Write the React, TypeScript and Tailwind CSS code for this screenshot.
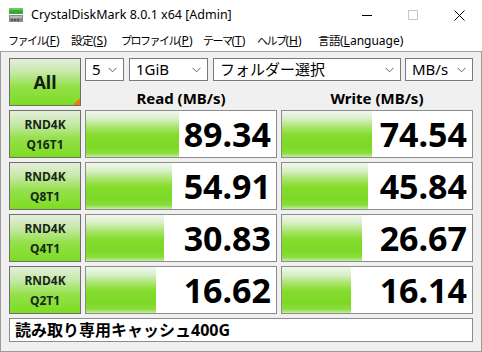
import React from "react";

const F = { fontFamily: '"Noto Sans", "Noto Sans CJK JP", sans-serif' };

const barGrad =
  "linear-gradient(to bottom, #f2f7ee 0%, #d6efc4 18%, #a6e466 36%, #84dc2c 52%, #7dd826 78%, #8ade3e 92%, #c6eea6 100%)";
const btnGrad =
  "linear-gradient(to bottom, #e4efdc 0%, #c4e8a4 30%, #94e04a 60%, #7edc22 100%)";

const rows = [
  { l1: "RND4K", l2: "Q16T1", r: "89.34", rw: 93, w: "74.54", ww: 90 },
  { l1: "RND4K", l2: "Q8T1", r: "54.91", rw: 86, w: "45.84", ww: 86 },
  { l1: "RND4K", l2: "Q4T1", r: "30.83", rw: 78, w: "26.67", ww: 80 },
  { l1: "RND4K", l2: "Q2T1", r: "16.62", rw: 70, w: "16.14", ww: 69 },
];

function Chevron() {
  return (
    <svg width="9" height="6" viewBox="0 0 9 6" className="shrink-0">
      <path d="M0.5 0.8 L4.5 4.8 L8.5 0.8" fill="none" stroke="#606060" strokeWidth="1" />
    </svg>
  );
}

function Combo({ w, text }: { w: string; text: string }) {
  return (
    <div className={`${w} h-[23px] bg-white border border-[#7a7a7a] flex items-center justify-between pl-[6px] pr-[6px]`}>
      <span className="text-[15px] leading-none text-[#000]">{text}</span>
      <Chevron />
    </div>
  );
}

function Cell({ value, width }: { value: string; width: number }) {
  return (
    <div className="relative h-[48px] bg-white border border-[#8c8c8c]">
      <div className="absolute left-0 top-0 bottom-0" style={{ width, background: barGrad }} />
      <div className="relative h-full flex items-center justify-end pr-[5px]">
        <span className="text-[34px] font-bold leading-none text-black">{value}</span>
      </div>
    </div>
  );
}

function MenuItem({ w, jp, key1, rest, kanji }: { w: string; jp: string; key1: string; rest?: string; kanji?: boolean }) {
  return (
    <div className={`${w} shrink-0 whitespace-nowrap flex items-center`}>
      <span className={kanji ? "text-[11.5px] tracking-[-0.5px]" : "text-[11px] tracking-[-1.5px]"}>{jp}</span>
      <span className="text-[12px]">
        (<span className="underline">{key1}</span>
        {rest ?? ""})
      </span>
    </div>
  );
}

export default function App() {
  return (
    <div className="w-[482px] h-[352px] overflow-hidden bg-white flex flex-col" style={F}>
      {/* Title bar */}
      <div className="h-[30px] flex items-center bg-white shrink-0">
        <svg width="16" height="16" viewBox="0 0 16 16" className="ml-[8px]">
          <rect x="1" y="1" width="14" height="6" fill="#3aa83a" />
          <rect x="1" y="1" width="14" height="2" fill="#66cc55" />
          <rect x="1" y="8" width="14" height="7" fill="#8a8a8a" />
          <rect x="2" y="9" width="12" height="2" fill="#b8b8b8" />
          <rect x="3" y="12" width="2" height="2" fill="#555" />
          <rect x="6" y="12" width="2" height="2" fill="#555" />
          <rect x="9" y="12" width="2" height="2" fill="#555" />
        </svg>
        <span className="ml-[7px] text-[12.5px] text-[#000] leading-none">CrystalDiskMark 8.0.1 x64 [Admin]</span>
        <div className="ml-auto flex items-center h-full">
          <div className="w-[46px] h-full flex items-center justify-center">
            <div className="w-[10px] h-[1px] bg-[#000]" />
          </div>
          <div className="w-[46px] h-full flex items-center justify-center">
            <div className="w-[10px] h-[10px] border border-[#c8c8c8]" />
          </div>
          <div className="w-[46px] h-full flex items-center justify-center">
            <svg width="11" height="11" viewBox="0 0 11 11">
              <path d="M0.5 0.5 L10.5 10.5 M10.5 0.5 L0.5 10.5" stroke="#000" strokeWidth="1" />
            </svg>
          </div>
        </div>
      </div>
      {/* Menu bar */}
      <div className="h-[22px] flex items-center text-[12px] text-[#000] leading-none shrink-0 border-b border-[#a0a0a0] pl-[8px]">
        <MenuItem w="w-[63px]" jp="ファイル" key1="F" />
        <MenuItem w="w-[50px]" jp="設定" key1="S" kanji />
        <MenuItem w="w-[82px]" jp="プロファイル" key1="P" />
        <MenuItem w="w-[54px]" jp="テーマ" key1="T" />
        <MenuItem w="w-[61px]" jp="ヘルプ" key1="H" />
        <MenuItem w="w-[90px]" jp="言語" key1="L" rest="anguage" kanji />
      </div>
      {/* Content */}
      <div className="flex-1 bg-[#f0f0f0] border-l border-r border-b border-[#9a9a9a] pl-[8px] pt-[6px]">
        <div className="grid grid-cols-[72px_192px_192px] gap-x-[4px] gap-y-[4px]">
          {/* All button */}
          <div
            className="relative h-[48px] border border-[#6e6e6e] flex items-center justify-center"
            style={{ background: btnGrad }}
          >
            <span className="text-[18px] font-bold text-[#102010] leading-none">All</span>
            <svg width="7" height="7" viewBox="0 0 7 7" className="absolute right-0 bottom-0">
              <path d="M7 0 L7 7 L0 7 Z" fill="#f07818" />
            </svg>
          </div>
          <div className="col-span-2 flex flex-col">
            <div className="flex gap-x-[5px]">
              <Combo w="w-[39px]" text="5" />
              <Combo w="w-[79px]" text="1GiB" />
              <Combo w="w-[188px]" text="フォルダー選択" />
              <div className="ml-[-1px]">
                <Combo w="w-[68px]" text="MB/s" />
              </div>
            </div>
            <div className="flex flex-1 items-center pt-[9px]">
              <div className="w-[192px] text-center text-[15px] font-bold text-[#000] leading-none">Read (MB/s)</div>
              <div className="w-[4px]" />
              <div className="w-[192px] text-center text-[15px] font-bold text-[#000] leading-none">Write (MB/s)</div>
            </div>
          </div>
          {rows.map((r) => (
            <React.Fragment key={r.l2}>
              <div
                className="h-[48px] border border-[#6e6e6e] flex flex-col items-center justify-center gap-[7px]"
                style={{ background: btnGrad }}
              >
                <span className="text-[12px] font-bold text-[#182818] leading-[13px]">{r.l1}</span>
                <span className="text-[12px] font-bold text-[#182818] leading-[13px]">{r.l2}</span>
              </div>
              <Cell value={r.r} width={r.rw} />
              <Cell value={r.w} width={r.ww} />
            </React.Fragment>
          ))}
          <div className="col-span-3 h-[24px] bg-white border border-[#8c8c8c] flex items-center pl-[5px]">
            <span className="text-[16px] font-bold text-[#000] leading-none">読み取り専用キャッシュ400G</span>
          </div>
        </div>
      </div>
    </div>
  );
}
